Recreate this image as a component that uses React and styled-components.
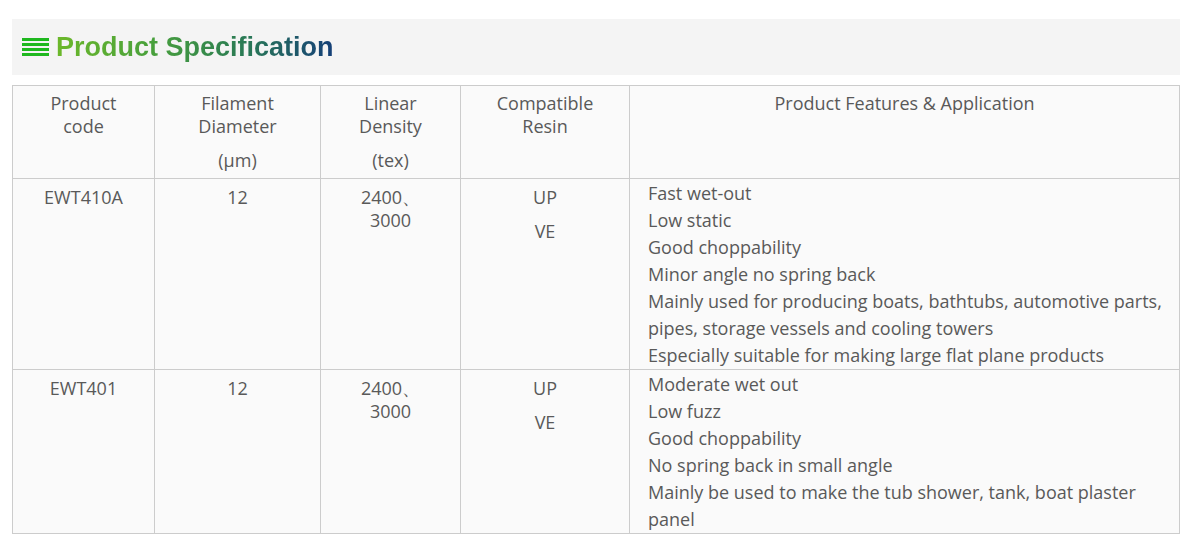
import styled, { createGlobalStyle } from 'styled-components';

const GlobalStyle = createGlobalStyle`
  html, body {
    margin: 0;
    padding: 0;
    background: #ffffff;
  }
`;

const rows = [
  {
    code: 'EWT410A',
    diameter: '12',
    density: ['2400、', '3000'],
    resin: ['UP', 'VE'],
    features: [
      'Fast wet-out',
      'Low static',
      'Good choppability',
      'Minor angle no spring back',
      'Mainly used for producing boats, bathtubs, automotive parts, pipes, storage vessels and cooling towers',
      'Especially suitable for making large flat plane products',
    ],
  },
  {
    code: 'EWT401',
    diameter: '12',
    density: ['2400、', '3000'],
    resin: ['UP', 'VE'],
    features: [
      'Moderate wet out',
      'Low fuzz',
      'Good choppability',
      'No spring back in small angle',
      'Mainly be used to make the tub shower, tank, boat plaster panel',
    ],
  },
];

const BarsIcon = () => (
  <svg width="27" height="20" viewBox="0 0 27 20">
    {[0, 5, 10, 15].map((y) => (
      <rect key={y} x="0" y={y} width="27" height="3" fill="#1fb81f" />
    ))}
  </svg>
);

const App = () => {
  return (
    <Page>
      <GlobalStyle />
      <TitleBar>
        <BarsIcon />
        <Title>Product Specification</Title>
      </TitleBar>
      <SpecTable>
        <colgroup>
          <col style={{ width: 142 }} />
          <col style={{ width: 166 }} />
          <col style={{ width: 140 }} />
          <col style={{ width: 169 }} />
          <col />
        </colgroup>
        <thead>
          <tr>
            <HeadCell>
              <Para>Product<br />code</Para>
            </HeadCell>
            <HeadCell>
              <Para>Filament<br />Diameter</Para>
              <Para>(μm)</Para>
            </HeadCell>
            <HeadCell>
              <Para>Linear<br />Density</Para>
              <Para>(tex)</Para>
            </HeadCell>
            <HeadCell>
              <Para>Compatible<br />Resin</Para>
            </HeadCell>
            <HeadCell>
              <Para>Product Features &amp; Application</Para>
            </HeadCell>
          </tr>
        </thead>
        <tbody>
          {rows.map((row) => (
            <tr key={row.code}>
              <Cell>
                <Para>{row.code}</Para>
              </Cell>
              <Cell>
                <Para>{row.diameter}</Para>
              </Cell>
              <Cell>
                <Para>
                  {row.density[0]}
                  <br />
                  {row.density[1]}
                </Para>
              </Cell>
              <Cell>
                {row.resin.map((r) => (
                  <Para key={r}>{r}</Para>
                ))}
              </Cell>
              <FeatureCell>
                {row.features.map((f) => (
                  <FeatureLine key={f}>{f}</FeatureLine>
                ))}
              </FeatureCell>
            </tr>
          ))}
        </tbody>
      </SpecTable>
    </Page>
  );
};

const Page = styled.div`
  padding: 19px 11px 9px 12px;
  font-family: 'Open Sans', 'Liberation Sans', sans-serif;
`;

const TitleBar = styled.div`
  display: flex;
  align-items: center;
  gap: 7px;
  height: 56px;
  padding: 0 10px;
  background: #f4f4f4;
  margin-bottom: 10px;

  svg {
    flex-shrink: 0;
    margin-top: 1px;
  }
`;

const Title = styled.h2`
  margin: 0;
  font-family: 'Liberation Sans', Arial, sans-serif;
  font-weight: bold;
  font-size: 27px;
  background: linear-gradient(90deg, #6cb82a 0%, #48a03c 35%, #2a7a55 68%, #153f78 100%);
  -webkit-background-clip: text;
  background-clip: text;
  -webkit-text-fill-color: transparent;
  color: transparent;
`;

const SpecTable = styled.table`
  width: 1168px;
  border-collapse: collapse;
  table-layout: fixed;
  background: #fafafa;
  color: #595959;
  font-size: 18px;
  border: 1px solid #cccccc;
`;

const HeadCell = styled.th`
  font-weight: normal;
  text-align: center;
  vertical-align: top;
  border: 1px solid #cccccc;
  padding: 6px 6px 6px;
  line-height: 23px;
`;

const Cell = styled.td`
  text-align: center;
  vertical-align: top;
  border: 1px solid #cccccc;
  padding: 7px 6px 6px;
  line-height: 23px;
`;

const Para = styled.p`
  margin: 0 0 11px;

  &:last-child {
    margin-bottom: 0;
  }
`;

const FeatureCell = styled.td`
  vertical-align: top;
  border: 1px solid #cccccc;
  padding: 1px 8px 0 18px;
  line-height: 27px;
`;

const FeatureLine = styled.div`
  margin: 0;
`;

export default App;
